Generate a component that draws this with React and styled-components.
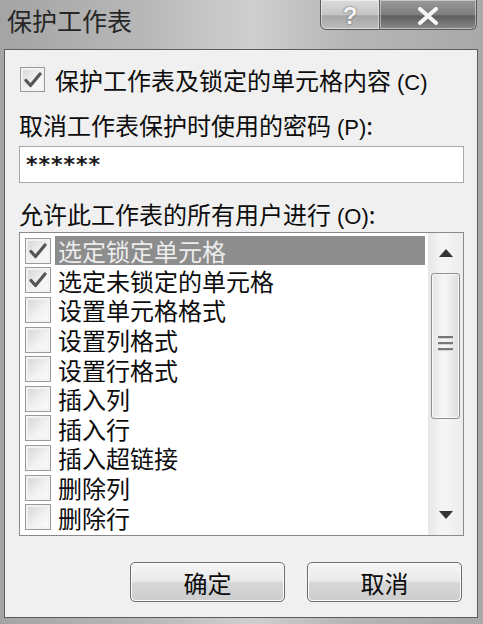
import React from 'react';
import styled, { createGlobalStyle } from 'styled-components';

const GlobalStyle = createGlobalStyle`
    html, body {
        margin: 0;
        padding: 0;
        background: #b4b4b4;
    }
    body {
        font-family: 'Noto Sans CJK SC', 'Noto Sans', sans-serif;
        color: #0c0c0c;
    }
`;

const Window = styled.div`
    width: 483px;
    height: 624px;
    display: flex;
    flex-direction: column;
    background: linear-gradient(to right, #a4a4a4, #b8b8b8 30%, #cfcfcf 52%, #b6b6b6 72%, #a9a9a9);
    overflow: hidden;
`;

const TitleBar = styled.div`
    height: 49px;
    display: flex;
    justify-content: space-between;
    align-items: flex-start;
    padding: 0 6px 0 7px;
    box-sizing: border-box;
`;

const Title = styled.div`
    font-size: 25px;
    line-height: 30px;
    padding-top: 5px;
    color: #262626;
`;

const CaptionButtons = styled.div`
    display: flex;
    height: 31px;
    margin-top: -1px;
`;

const CaptionButton = styled.div`
    width: ${p => p.$w}px;
    height: 100%;
    box-sizing: border-box;
    border: 1px solid #5a5a5a;
    border-left-width: ${p => (p.$first ? 1 : 0)}px;
    border-radius: ${p => (p.$first ? '0 0 0 6px' : '0 0 6px 0')};
    background: ${p => (p.$dark
        ? 'linear-gradient(#9a9a9a, #7e7e7e 50%, #5e5e5e 55%, #8a8a8a)'
        : 'linear-gradient(#dcdcdc, #c4c4c4 50%, #a6a6a6 55%, #bdbdbd)')};
    box-shadow: inset 0 0 0 1px rgba(255, 255, 255, 0.45);
    display: flex;
    align-items: center;
    justify-content: center;
    padding-top: 2px;
    color: #f4f4f4;
    font-family: 'Liberation Sans', Arial, sans-serif;
    font-weight: bold;
    font-size: 24px;
    line-height: 1;
    text-shadow: 0 0 2px #444;
`;

const Body = styled.div`
    flex: 1;
    margin: 0 5px 6px 4px;
    border: 1px solid #5c5c5c;
    background: #f0f0f0;
    padding: 16px 13px 15px 14px;
    display: flex;
    flex-direction: column;
`;

const CheckRow = styled.div`
    height: 27px;
    display: flex;
    align-items: center;
    padding-left: 1px;
    gap: 10px;
    font-size: 24px;
`;

const Label = styled.div`
    height: 28px;
    margin-top: ${p => p.$top}px;
    font-size: 24px;
    line-height: 28px;
    white-space: nowrap;
`;

const Key = styled.span`
    font-family: 'Liberation Sans', Arial, sans-serif;
    font-size: 22px;
    margin-left: 6px;
`;

const PasswordBox = styled.div`
    height: 37px;
    margin-top: 7px;
    box-sizing: border-box;
    border: 1px solid #a8a8a8;
    background: #fff;
    display: flex;
    align-items: center;
    padding-left: 6px;
    font-family: 'DejaVu Sans', sans-serif;
    font-weight: bold;
    font-size: 22px;
    letter-spacing: 1px;
    color: #1a1a1a;
`;

const ListBox = styled.div`
    height: 304px;
    margin-top: 4px;
    box-sizing: border-box;
    border: 1px solid #8a8a8a;
    background: #fff;
    display: flex;
`;

const Rows = styled.div`
    flex: 1;
    padding: 3px 3px 0 5px;
    overflow: hidden;
`;

const Row = styled.div`
    height: 29.6px;
    display: flex;
    align-items: center;
    gap: 4px;
`;

const RowText = styled.div`
    flex: 1;
    height: 29px;
    line-height: 29px;
    padding-left: 3px;
    font-size: 24px;
    white-space: nowrap;
    background: ${p => (p.$selected ? '#8d8d8d' : 'transparent')};
    color: ${p => (p.$selected ? '#ececec' : '#0c0c0c')};
`;

const Box = styled.div`
    width: ${p => p.$size}px;
    height: ${p => p.$size}px;
    flex: none;
    box-sizing: border-box;
    border: 1px solid #9a9a9a;
    background: linear-gradient(135deg, #d4d4d4, #f3f3f3 60%, #fafafa);
    box-shadow: inset 0 0 0 2px #f2f2f2;
    display: flex;
    align-items: center;
    justify-content: center;
`;

const ScrollBar = styled.div`
    width: 35px;
    flex: none;
    background: linear-gradient(to right, #e6e6e6, #f6f6f6 40%, #ececec);
    display: flex;
    flex-direction: column;
    align-items: center;
`;

const Arrow = styled.div`
    height: ${p => p.$h}px;
    display: flex;
    align-items: center;
    justify-content: center;
`;

const Thumb = styled.div`
    width: 29px;
    height: 146px;
    box-sizing: border-box;
    border: 1px solid #8e8e8e;
    border-radius: 3px;
    background: linear-gradient(to right, #e4e4e4, #f7f7f7 45%, #dedede);
    box-shadow: inset 0 0 0 1px #fafafa;
    display: flex;
    flex-direction: column;
    align-items: center;
    justify-content: center;
    gap: 3px;
    padding-bottom: 6px;
`;

const Grip = styled.div`
    width: 15px;
    height: 2px;
    background: #777;
    border-bottom: 1px solid #d6d6d6;
`;

const Spacer = styled.div`
    flex: 1;
`;

const ButtonRow = styled.div`
    margin-top: 26px;
    height: 40px;
    display: flex;
    justify-content: flex-end;
    gap: 22px;
    padding-right: 2px;
`;

const Button = styled.div`
    width: 155px;
    height: 40px;
    box-sizing: border-box;
    border: 1px solid #6c6c6c;
    border-radius: 5px;
    background: linear-gradient(#f6f6f6, #e9e9e9 48%, #d6d6d6 52%, #cdcdcd);
    box-shadow: inset 0 0 0 1px #fbfbfb;
    display: flex;
    align-items: center;
    justify-content: center;
    font-size: 24px;
    color: #0c0c0c;
`;

const Check = () => (
    <svg width="18" height="16" viewBox="0 0 18 16">
        <path d="M2 8.5 L6.5 13.5 L16 2" fill="none" stroke="#555" strokeWidth="3.2" strokeLinejoin="round" strokeLinecap="round" />
    </svg>
);

const CheckBox = ({ checked, size = 26 }) => (
    <Box $size={size}>{checked && <Check />}</Box>
);

const items = [
    { text: '选定锁定单元格', checked: true, selected: true },
    { text: '选定未锁定的单元格', checked: true },
    { text: '设置单元格格式' },
    { text: '设置列格式' },
    { text: '设置行格式' },
    { text: '插入列' },
    { text: '插入行' },
    { text: '插入超链接' },
    { text: '删除列' },
    { text: '删除行' },
];

export default function App() {
    return (
        <>
            <GlobalStyle />
            <Window>
                <TitleBar>
                    <Title>保护工作表</Title>
                    <CaptionButtons>
                        <CaptionButton $w={60} $first>?</CaptionButton>
                        <CaptionButton $w={97} $dark>
                            <svg width="22" height="18" viewBox="0 0 22 18">
                                <path d="M3 2 L19 16 M19 2 L3 16" stroke="#f6f6f6" strokeWidth="4" strokeLinecap="round" />
                            </svg>
                        </CaptionButton>
                    </CaptionButtons>
                </TitleBar>
                <Body>
                    <CheckRow>
                        <CheckBox checked size={25} />
                        <span>保护工作表及锁定的单元格内容<Key>(C)</Key></span>
                    </CheckRow>
                    <Label $top={18}>取消工作表保护时使用的密码<Key>(P)</Key>:</Label>
                    <PasswordBox>******</PasswordBox>
                    <Label $top={17}>允许此工作表的所有用户进行<Key>(O)</Key>:</Label>
                    <ListBox>
                        <Rows>
                            {items.map(item => (
                                <Row key={item.text}>
                                    <CheckBox checked={item.checked} />
                                    <RowText $selected={item.selected}>{item.text}</RowText>
                                </Row>
                            ))}
                        </Rows>
                        <ScrollBar>
                            <Arrow $h={40}>
                                <svg width="14" height="8" viewBox="0 0 14 8"><path d="M7 0 L14 8 L0 8 Z" fill="#333" /></svg>
                            </Arrow>
                            <Thumb>
                                <Grip />
                                <Grip />
                                <Grip />
                            </Thumb>
                            <Spacer />
                            <Arrow $h={40}>
                                <svg width="14" height="8" viewBox="0 0 14 8"><path d="M0 0 L14 0 L7 8 Z" fill="#333" /></svg>
                            </Arrow>
                        </ScrollBar>
                    </ListBox>
                    <ButtonRow>
                        <Button>确定</Button>
                        <Button>取消</Button>
                    </ButtonRow>
                </Body>
            </Window>
        </>
    );
}
